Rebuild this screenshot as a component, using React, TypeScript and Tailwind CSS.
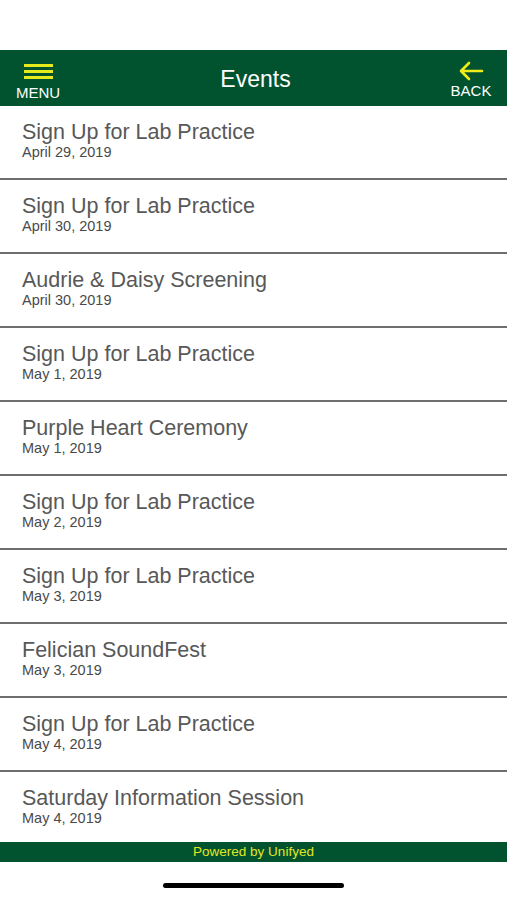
import React from 'react';

const events = [
  { title: 'Sign Up for Lab Practice', date: 'April 29, 2019' },
  { title: 'Sign Up for Lab Practice', date: 'April 30, 2019' },
  { title: 'Audrie & Daisy Screening', date: 'April 30, 2019' },
  { title: 'Sign Up for Lab Practice', date: 'May 1, 2019' },
  { title: 'Purple Heart Ceremony', date: 'May 1, 2019' },
  { title: 'Sign Up for Lab Practice', date: 'May 2, 2019' },
  { title: 'Sign Up for Lab Practice', date: 'May 3, 2019' },
  { title: 'Felician SoundFest', date: 'May 3, 2019' },
  { title: 'Sign Up for Lab Practice', date: 'May 4, 2019' },
  { title: 'Saturday Information Session', date: 'May 4, 2019' },
];

const App: React.FC = () => {
  return (
    <div className="w-[507px] h-[900px] bg-white flex flex-col overflow-hidden font-['Liberation_Sans',Arial,sans-serif]">
      {/* status bar space */}
      <div className="h-[50px] shrink-0" />

      {/* Header */}
      <header className="h-[56px] shrink-0 bg-[#01532f] flex items-start justify-between px-[15px]">
        <button className="flex flex-col items-center w-[46px] pt-[14px]">
          <span className="flex flex-col gap-[3px] w-[29px]">
            <span className="h-[3px] bg-[#e5ea1c]" />
            <span className="h-[3px] bg-[#e5ea1c]" />
            <span className="h-[3px] bg-[#e5ea1c]" />
          </span>
          <span className="text-white text-[15px] leading-none mt-[6px]">MENU</span>
        </button>
        <h1 className="text-white text-[23px] leading-none pt-[18px]">Events</h1>
        <button className="flex flex-col items-center w-[42px] pt-[11px]">
          <svg width="26" height="20" viewBox="0 0 26 20" fill="none" stroke="#f0ec1a" strokeWidth="2.6" strokeLinecap="round" strokeLinejoin="round">
            <path d="M24 10H3M11 2L3 10l8 8" />
          </svg>
          <span className="text-white text-[15px] leading-none mt-[2px]">BACK</span>
        </button>
      </header>

      {/* List */}
      <ul className="flex-1 overflow-hidden">
        {events.map((e, i) => (
          <li key={i} className="h-[74px] border-b-2 border-[#6e6e6e] pl-[22px] pt-[15px]">
            <div className="text-[21.5px] leading-[23px] text-[#585858]">{e.title}</div>
            <div className="text-[14.5px] leading-[17px] text-[#4a4a4a]">{e.date}</div>
          </li>
        ))}
      </ul>

      {/* Footer */}
      <div className="h-[20px] shrink-0 bg-[#01532f] flex items-center justify-center">
        <span className="text-[13.5px] leading-none text-[#e3e624]">Powered by Unifyed</span>
      </div>
      <div className="h-[38px] shrink-0 flex justify-center items-start pt-[21px]">
        <div className="w-[181px] h-[5px] rounded-full bg-black" />
      </div>
    </div>
  );
};

export default App;
